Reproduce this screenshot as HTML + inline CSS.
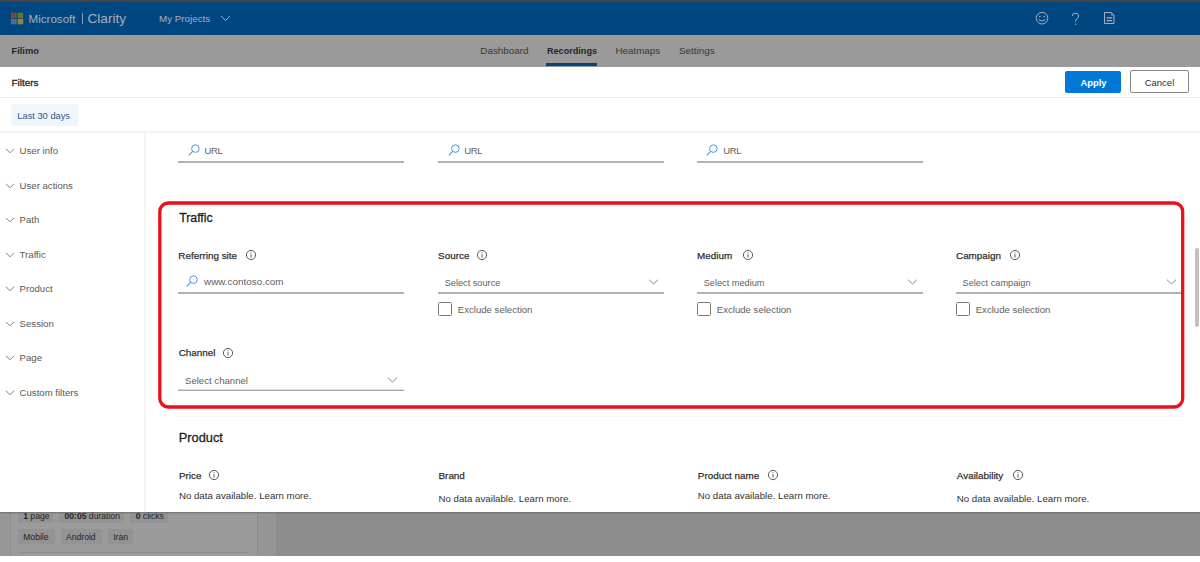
<!DOCTYPE html>
<html><head><meta charset="utf-8"><style>
html,body{margin:0;padding:0;width:1200px;height:562px;overflow:hidden;background:#fff;font-family:"Liberation Sans",sans-serif}
.t{position:absolute;white-space:nowrap}
.r{position:absolute}
</style></head><body>
<div class="r" style="left:0px;top:0px;width:1200px;height:1px;background:#474545"></div>
<div class="r" style="left:0px;top:1px;width:1200px;height:1px;background:#1f4b73"></div>
<div class="r" style="left:0px;top:2px;width:1200px;height:33px;background:#004781"></div>
<svg class="r" style="left:0;top:0" width="30" height="30" viewBox="0 0 30 30"><rect x="11" y="12.7" width="5.6" height="5.4" fill="#8e4424"/><rect x="17.6" y="12.7" width="5.6" height="5.4" fill="#5e7a24"/><rect x="11" y="18.9" width="5.6" height="5.4" fill="#4a7094"/><rect x="17.6" y="18.9" width="5.6" height="5.4" fill="#9a8030"/></svg>
<div class="t" style="left:28.5px;top:13px;font-size:11.6px;line-height:12px;font-weight:400;color:#a7afbc;">Microsoft</div>
<div class="r" style="left:82px;top:13px;width:1px;height:11px;background:#8a9ab0"></div>
<div class="t" style="left:87.5px;top:11px;font-size:13.6px;line-height:15px;font-weight:400;color:#a7afbc;">Clarity</div>
<div class="t" style="left:159px;top:13px;font-size:9.8px;line-height:11px;font-weight:400;color:#a7afbc;">My Projects</div>
<svg class="r" style="left:220px;top:15px" width="11" height="7" viewBox="0 0 11 7"><path d="M1 1 L5.5 5.5 L10 1" fill="none" stroke="#a7afbc" stroke-width="1"/></svg>
<svg class="r" style="left:1034px;top:11px" width="16" height="15" viewBox="0 0 16 15">
<circle cx="8" cy="7.2" r="5.8" fill="none" stroke="#a7afbc" stroke-width="1"/>
<circle cx="5.8" cy="5.6" r="0.8" fill="#a7afbc"/><circle cx="10.2" cy="5.6" r="0.8" fill="#a7afbc"/>
<path d="M4.6 8.6 Q8 11.6 11.4 8.6" fill="none" stroke="#a7afbc" stroke-width="1"/></svg>
<svg class="r" style="left:1070px;top:12px" width="11" height="15" viewBox="0 0 11 15">
<path d="M2.2 4 Q2.2 1.2 5.5 1.2 Q8.6 1.2 8.6 4 Q8.6 5.8 6.6 7 Q5.6 7.6 5.6 9.6" fill="none" stroke="#a7afbc" stroke-width="1"/>
<circle cx="5.6" cy="12.2" r="0.7" fill="#a7afbc"/></svg>
<svg class="r" style="left:1103px;top:11px" width="13" height="15" viewBox="0 0 13 15">
<path d="M1.5 1.5 H8.3 L11 4.2 V12.5 H1.5 Z" fill="none" stroke="#a7afbc" stroke-width="1"/>
<path d="M3.6 6.9 H9.2 M3.6 9.6 H9.2" stroke="#a7afbc" stroke-width="1.3"/><path d="M8.3 1.5 V4.2 H11" fill="none" stroke="#a7afbc" stroke-width="0.7"/></svg>
<div class="r" style="left:0px;top:35px;width:1200px;height:32px;background:#9a9a9a"></div>
<div class="t" style="left:11.5px;top:46px;font-size:9.3px;line-height:10px;font-weight:700;color:#262524;">Filimo</div>
<div class="t" style="left:480.3px;top:45px;font-size:9.9px;line-height:11px;font-weight:400;color:#383736;">Dashboard</div>
<div class="t" style="left:547px;top:46px;font-size:9.1px;line-height:10px;font-weight:700;color:#262524;">Recordings</div>
<div class="t" style="left:615.5px;top:45px;font-size:9.8px;line-height:11px;font-weight:400;color:#383736;">Heatmaps</div>
<div class="t" style="left:679px;top:45px;font-size:9.9px;line-height:11px;font-weight:400;color:#383736;">Settings</div>
<div class="r" style="left:546px;top:63px;width:51px;height:3px;background:#004781"></div>
<div class="r" style="left:0px;top:67px;width:1200px;height:445px;background:#ffffff"></div>
<div class="t" style="left:11.5px;top:77px;font-size:9.9px;line-height:11px;font-weight:400;color:#201f1e;-webkit-text-stroke:0.25px #201f1e;-webkit-text-stroke:0.3px #201f1e">Filters</div>
<div class="r" style="left:1065px;top:70.5px;width:56px;height:22.5px;background:#0078d4;border-radius:2px"></div>
<div class="t" style="left:1080.5px;top:77px;font-size:9.4px;line-height:11px;font-weight:700;color:#ffffff;">Apply</div>
<div class="r" style="left:1130px;top:70px;width:59px;height:23px;background:#fff;border:1px solid #8a8886;border-radius:2px;box-sizing:border-box"></div>
<div class="t" style="left:1144.7px;top:77px;font-size:9.5px;line-height:11px;font-weight:400;color:#323130;">Cancel</div>
<div class="r" style="left:0px;top:97px;width:1200px;height:1px;background:#edebe9"></div>
<div class="r" style="left:11px;top:104px;width:67px;height:22px;background:#eff6fc;border-radius:1px"></div>
<div class="t" style="left:17.3px;top:111px;font-size:9.3px;line-height:10px;font-weight:400;color:#2c5a88;">Last 30 days</div>
<div class="r" style="left:0px;top:131px;width:1200px;height:2px;background:#f4f3f2"></div>
<div class="r" style="left:144px;top:133px;width:2px;height:379px;background:#f4f3f2"></div>
<div class="t" style="left:19.6px;top:145px;font-size:9.6px;line-height:11px;font-weight:400;color:#5a5856;">User info</div>
<svg class="r" style="left:5px;top:148px" width="10" height="6" viewBox="0 0 10 6"><path d="M1 0.8 L5 4.8 L9 0.8" fill="none" stroke="#7f7d7b" stroke-width="1"/></svg>
<div class="t" style="left:19.6px;top:180px;font-size:9.6px;line-height:11px;font-weight:400;color:#5a5856;">User actions</div>
<svg class="r" style="left:5px;top:183px" width="10" height="6" viewBox="0 0 10 6"><path d="M1 0.8 L5 4.8 L9 0.8" fill="none" stroke="#7f7d7b" stroke-width="1"/></svg>
<div class="t" style="left:19.6px;top:214px;font-size:9.6px;line-height:11px;font-weight:400;color:#5a5856;">Path</div>
<svg class="r" style="left:5px;top:217px" width="10" height="6" viewBox="0 0 10 6"><path d="M1 0.8 L5 4.8 L9 0.8" fill="none" stroke="#7f7d7b" stroke-width="1"/></svg>
<div class="t" style="left:19.6px;top:249px;font-size:9.6px;line-height:11px;font-weight:400;color:#5a5856;">Traffic</div>
<svg class="r" style="left:5px;top:252px" width="10" height="6" viewBox="0 0 10 6"><path d="M1 0.8 L5 4.8 L9 0.8" fill="none" stroke="#7f7d7b" stroke-width="1"/></svg>
<div class="t" style="left:19.6px;top:283px;font-size:9.6px;line-height:11px;font-weight:400;color:#5a5856;">Product</div>
<svg class="r" style="left:5px;top:286px" width="10" height="6" viewBox="0 0 10 6"><path d="M1 0.8 L5 4.8 L9 0.8" fill="none" stroke="#7f7d7b" stroke-width="1"/></svg>
<div class="t" style="left:19.6px;top:318px;font-size:9.6px;line-height:11px;font-weight:400;color:#5a5856;">Session</div>
<svg class="r" style="left:5px;top:321px" width="10" height="6" viewBox="0 0 10 6"><path d="M1 0.8 L5 4.8 L9 0.8" fill="none" stroke="#7f7d7b" stroke-width="1"/></svg>
<div class="t" style="left:19.6px;top:352px;font-size:9.6px;line-height:11px;font-weight:400;color:#5a5856;">Page</div>
<svg class="r" style="left:5px;top:355px" width="10" height="6" viewBox="0 0 10 6"><path d="M1 0.8 L5 4.8 L9 0.8" fill="none" stroke="#7f7d7b" stroke-width="1"/></svg>
<div class="t" style="left:19.6px;top:387px;font-size:9.6px;line-height:11px;font-weight:400;color:#5a5856;">Custom filters</div>
<svg class="r" style="left:5px;top:390px" width="10" height="6" viewBox="0 0 10 6"><path d="M1 0.8 L5 4.8 L9 0.8" fill="none" stroke="#7f7d7b" stroke-width="1"/></svg>
<svg class="r" style="left:188px;top:144px" width="13" height="13" viewBox="0 0 13 13"><circle cx="7.4" cy="4.6" r="3.8" fill="none" stroke="#4a94e4" stroke-width="1"/><path d="M4.7 7.3 L0.7 11.3" stroke="#4a94e4" stroke-width="1.1"/></svg>
<div class="t" style="left:204.4px;top:145px;font-size:9.5px;line-height:11px;font-weight:400;color:#605e5c;letter-spacing:-0.35px">URL</div>
<div class="r" style="left:178.3px;top:161px;width:226px;height:2px;background:#b3b0ad"></div>
<svg class="r" style="left:448px;top:144px" width="13" height="13" viewBox="0 0 13 13"><circle cx="7.4" cy="4.6" r="3.8" fill="none" stroke="#4a94e4" stroke-width="1"/><path d="M4.7 7.3 L0.7 11.3" stroke="#4a94e4" stroke-width="1.1"/></svg>
<div class="t" style="left:464.20000000000005px;top:145px;font-size:9.5px;line-height:11px;font-weight:400;color:#605e5c;letter-spacing:-0.35px">URL</div>
<div class="r" style="left:438.1px;top:161px;width:226px;height:2px;background:#b3b0ad"></div>
<svg class="r" style="left:706px;top:144px" width="13" height="13" viewBox="0 0 13 13"><circle cx="7.4" cy="4.6" r="3.8" fill="none" stroke="#4a94e4" stroke-width="1"/><path d="M4.7 7.3 L0.7 11.3" stroke="#4a94e4" stroke-width="1.1"/></svg>
<div class="t" style="left:723.2px;top:145px;font-size:9.5px;line-height:11px;font-weight:400;color:#605e5c;letter-spacing:-0.35px">URL</div>
<div class="r" style="left:697.1px;top:161px;width:226px;height:2px;background:#b3b0ad"></div>
<div class="r" style="left:178px;top:196px;width:1004px;height:2px;background:#f8f8f7"></div>
<div class="t" style="left:179.2px;top:211px;font-size:12.3px;line-height:14px;font-weight:400;color:#201f1e;-webkit-text-stroke:0.25px #201f1e;-webkit-text-stroke:0.3px #201f1e">Traffic</div>
<div class="t" style="left:178.3px;top:250px;font-size:9.9px;line-height:11px;font-weight:400;color:#323130;-webkit-text-stroke:0.25px #323130;">Referring site</div>
<div class="t" style="left:438.1px;top:250px;font-size:9.9px;line-height:11px;font-weight:400;color:#323130;-webkit-text-stroke:0.25px #323130;">Source</div>
<div class="t" style="left:697.1px;top:250px;font-size:9.9px;line-height:11px;font-weight:400;color:#323130;-webkit-text-stroke:0.25px #323130;">Medium</div>
<div class="t" style="left:956px;top:250px;font-size:9.9px;line-height:11px;font-weight:400;color:#323130;-webkit-text-stroke:0.25px #323130;">Campaign</div>
<svg class="r" style="left:245.3px;top:248.6px" width="12" height="12" viewBox="0 0 12 12"><circle cx="6" cy="6" r="4.6" fill="none" stroke="#4a4846" stroke-width="0.9"/><path d="M6 5.2 V8.6" stroke="#4a4846" stroke-width="0.9"/><circle cx="6" cy="3.7" r="0.55" fill="#4a4846"/></svg>
<svg class="r" style="left:475.6px;top:248.6px" width="12" height="12" viewBox="0 0 12 12"><circle cx="6" cy="6" r="4.6" fill="none" stroke="#4a4846" stroke-width="0.9"/><path d="M6 5.2 V8.6" stroke="#4a4846" stroke-width="0.9"/><circle cx="6" cy="3.7" r="0.55" fill="#4a4846"/></svg>
<svg class="r" style="left:741.8px;top:248.6px" width="12" height="12" viewBox="0 0 12 12"><circle cx="6" cy="6" r="4.6" fill="none" stroke="#4a4846" stroke-width="0.9"/><path d="M6 5.2 V8.6" stroke="#4a4846" stroke-width="0.9"/><circle cx="6" cy="3.7" r="0.55" fill="#4a4846"/></svg>
<svg class="r" style="left:1008.8px;top:248.6px" width="12" height="12" viewBox="0 0 12 12"><circle cx="6" cy="6" r="4.6" fill="none" stroke="#4a4846" stroke-width="0.9"/><path d="M6 5.2 V8.6" stroke="#4a4846" stroke-width="0.9"/><circle cx="6" cy="3.7" r="0.55" fill="#4a4846"/></svg>
<svg class="r" style="left:186px;top:275px" width="13" height="13" viewBox="0 0 13 13"><circle cx="7.4" cy="4.6" r="3.8" fill="none" stroke="#4a94e4" stroke-width="1"/><path d="M4.7 7.3 L0.7 11.3" stroke="#4a94e4" stroke-width="1.1"/></svg>
<div class="t" style="left:204px;top:276px;font-size:9.9px;line-height:11px;font-weight:400;color:#605e5c;">www.contoso.com</div>
<div class="r" style="left:178.3px;top:292px;width:226px;height:2px;background:#b3b0ad"></div>
<div class="t" style="left:444.70000000000005px;top:278px;font-size:9.2px;line-height:10px;font-weight:400;color:#605e5c;">Select source</div>
<svg class="r" style="left:648px;top:279px" width="11" height="6" viewBox="0 0 11 6"><path d="M1 0.7 L5.5 5 L10 0.7" fill="none" stroke="#8a8886" stroke-width="1"/></svg>
<div class="r" style="left:438.1px;top:292px;width:226px;height:2px;background:#b3b0ad"></div>
<div class="r" style="left:438.1px;top:302px;width:14px;height:14px;border:1px solid #7a7877;border-radius:1.5px;box-sizing:border-box"></div>
<div class="t" style="left:457.8px;top:304px;font-size:9.6px;line-height:11px;font-weight:400;color:#605e5c;">Exclude selection</div>
<div class="t" style="left:703.7px;top:278px;font-size:9.2px;line-height:10px;font-weight:400;color:#605e5c;">Select medium</div>
<svg class="r" style="left:907px;top:279px" width="11" height="6" viewBox="0 0 11 6"><path d="M1 0.7 L5.5 5 L10 0.7" fill="none" stroke="#8a8886" stroke-width="1"/></svg>
<div class="r" style="left:697.1px;top:292px;width:226px;height:2px;background:#b3b0ad"></div>
<div class="r" style="left:697.1px;top:302px;width:14px;height:14px;border:1px solid #7a7877;border-radius:1.5px;box-sizing:border-box"></div>
<div class="t" style="left:716.8000000000001px;top:304px;font-size:9.6px;line-height:11px;font-weight:400;color:#605e5c;">Exclude selection</div>
<div class="t" style="left:962.6px;top:278px;font-size:9.2px;line-height:10px;font-weight:400;color:#605e5c;">Select campaign</div>
<svg class="r" style="left:1166px;top:279px" width="11" height="6" viewBox="0 0 11 6"><path d="M1 0.7 L5.5 5 L10 0.7" fill="none" stroke="#8a8886" stroke-width="1"/></svg>
<div class="r" style="left:956px;top:292px;width:225px;height:2px;background:#b3b0ad"></div>
<div class="r" style="left:956px;top:302px;width:14px;height:14px;border:1px solid #7a7877;border-radius:1.5px;box-sizing:border-box"></div>
<div class="t" style="left:975.7px;top:304px;font-size:9.6px;line-height:11px;font-weight:400;color:#605e5c;">Exclude selection</div>
<div class="t" style="left:178.7px;top:347px;font-size:9.9px;line-height:11px;font-weight:400;color:#323130;-webkit-text-stroke:0.25px #323130;">Channel</div>
<svg class="r" style="left:221.7px;top:346.5px" width="12" height="12" viewBox="0 0 12 12"><circle cx="6" cy="6" r="4.6" fill="none" stroke="#4a4846" stroke-width="0.9"/><path d="M6 5.2 V8.6" stroke="#4a4846" stroke-width="0.9"/><circle cx="6" cy="3.7" r="0.55" fill="#4a4846"/></svg>
<div class="t" style="left:185px;top:375px;font-size:9.6px;line-height:11px;font-weight:400;color:#605e5c;">Select channel</div>
<svg class="r" style="left:387px;top:377px" width="11" height="6" viewBox="0 0 11 6"><path d="M1 0.7 L5.5 5 L10 0.7" fill="none" stroke="#8a8886" stroke-width="1"/></svg>
<div class="r" style="left:178.3px;top:389px;width:226px;height:1px;background:#dddbd9"></div>
<div class="r" style="left:178.3px;top:390px;width:226px;height:1px;background:#a8a6a4"></div>
<div class="r" style="left:178px;top:416px;width:1004px;height:1px;background:#f5f5f5"></div>
<div class="t" style="left:178.8px;top:430px;font-size:12.8px;line-height:15px;font-weight:400;color:#201f1e;-webkit-text-stroke:0.25px #201f1e;-webkit-text-stroke:0.3px #201f1e">Product</div>
<div class="t" style="left:178.9px;top:470px;font-size:9.9px;line-height:11px;font-weight:400;color:#323130;-webkit-text-stroke:0.25px #323130;">Price</div>
<svg class="r" style="left:207.6px;top:469px" width="12" height="12" viewBox="0 0 12 12"><circle cx="6" cy="6" r="4.6" fill="none" stroke="#4a4846" stroke-width="0.9"/><path d="M6 5.2 V8.6" stroke="#4a4846" stroke-width="0.9"/><circle cx="6" cy="3.7" r="0.55" fill="#4a4846"/></svg>
<div class="t" style="left:178.9px;top:490px;font-size:9.7px;line-height:11px;font-weight:400;color:#323130;">No data available. Learn more.</div>
<div class="t" style="left:438.5px;top:470px;font-size:9.9px;line-height:11px;font-weight:400;color:#323130;-webkit-text-stroke:0.25px #323130;">Brand</div>
<div class="t" style="left:438.5px;top:493px;font-size:9.7px;line-height:11px;font-weight:400;color:#323130;">No data available. Learn more.</div>
<div class="t" style="left:697.8px;top:470px;font-size:9.9px;line-height:11px;font-weight:400;color:#323130;-webkit-text-stroke:0.25px #323130;">Product name</div>
<svg class="r" style="left:766.9px;top:469px" width="12" height="12" viewBox="0 0 12 12"><circle cx="6" cy="6" r="4.6" fill="none" stroke="#4a4846" stroke-width="0.9"/><path d="M6 5.2 V8.6" stroke="#4a4846" stroke-width="0.9"/><circle cx="6" cy="3.7" r="0.55" fill="#4a4846"/></svg>
<div class="t" style="left:697.8px;top:490px;font-size:9.7px;line-height:11px;font-weight:400;color:#323130;">No data available. Learn more.</div>
<div class="t" style="left:956.8px;top:470px;font-size:9.9px;line-height:11px;font-weight:400;color:#323130;-webkit-text-stroke:0.25px #323130;">Availability</div>
<svg class="r" style="left:1012.2px;top:469px" width="12" height="12" viewBox="0 0 12 12"><circle cx="6" cy="6" r="4.6" fill="none" stroke="#4a4846" stroke-width="0.9"/><path d="M6 5.2 V8.6" stroke="#4a4846" stroke-width="0.9"/><circle cx="6" cy="3.7" r="0.55" fill="#4a4846"/></svg>
<div class="t" style="left:956.8px;top:493px;font-size:9.7px;line-height:11px;font-weight:400;color:#323130;">No data available. Learn more.</div>
<div class="r" style="left:1194.5px;top:248px;width:4.5px;height:78.5px;background:#c2c0be;border-radius:3px"></div>
<svg class="r" style="left:150px;top:190px" width="1050" height="230" viewBox="150 190 1050 230"><rect x="159.8" y="203.0" width="1022.9" height="204.0" rx="8.5" ry="8.5" fill="none" stroke="#e9111b" stroke-width="3.3"/></svg>
<div class="r" style="left:0px;top:512px;width:1200px;height:43.7px;background:#8d8d8d"></div>
<div class="r" style="left:0px;top:512px;width:10px;height:43.7px;background:#979797"></div>
<div class="r" style="left:10px;top:512px;width:248px;height:43.7px;background:#9b9b9b;border-left:1px solid #8e8e8e;border-right:1px solid #8a8a8a;box-sizing:border-box"></div>
<div class="r" style="left:258px;top:512px;width:18px;height:43.7px;background:#959595"></div>
<div class="r" style="left:18px;top:512px;width:34.8px;height:10.5px;background:#939393"></div>
<div class="r" style="left:58.9px;top:512px;width:65.19999999999999px;height:10.5px;background:#939393"></div>
<div class="r" style="left:129.8px;top:512px;width:38.099999999999994px;height:10.5px;background:#939393"></div>
<div class="r" style="left:18px;top:528.7px;width:37px;height:15.3px;background:#939393"></div>
<div class="r" style="left:60.7px;top:528.7px;width:40.89999999999999px;height:15.3px;background:#939393"></div>
<div class="r" style="left:108px;top:528.7px;width:24.69999999999999px;height:15.3px;background:#939393"></div>
<div class="t" style="left:23.2px;top:511px;font-size:8.6px;line-height:10px;font-weight:400;color:#232323;"><b>1</b> page</div>
<div class="t" style="left:64.5px;top:511px;font-size:8.6px;line-height:10px;font-weight:400;color:#232323;"><b>00:05</b> duration</div>
<div class="t" style="left:135.7px;top:511px;font-size:8.6px;line-height:10px;font-weight:400;color:#232323;"><b>0</b> clicks</div>
<div class="t" style="left:23.2px;top:532px;font-size:8.6px;line-height:10px;font-weight:400;color:#232323;">Mobile</div>
<div class="t" style="left:66px;top:532px;font-size:8.6px;line-height:10px;font-weight:400;color:#232323;">Android</div>
<div class="t" style="left:113.2px;top:532px;font-size:8.6px;line-height:10px;font-weight:400;color:#232323;">Iran</div>
<div class="r" style="left:17.7px;top:552px;width:231px;height:1px;background:#8c8c8c"></div>
<div class="r" style="left:0px;top:512px;width:1200px;height:2px;background:linear-gradient(#6f6f6f,#8d8d8d00)"></div>
<div class="r" style="left:0px;top:555.7px;width:1200px;height:6.3px;background:#ffffff"></div>
</body></html>
